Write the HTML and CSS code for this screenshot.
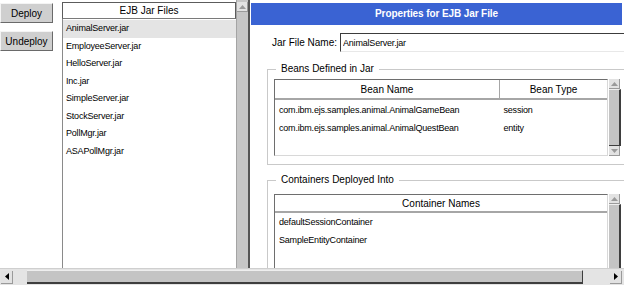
FILE: index.html
```html
<!DOCTYPE html>
<html lang="en">
<head>
    <meta charset="UTF-8">
    <title>EJB Jar Files</title>
    <link rel="stylesheet" href="styles.css">
</head>
<body>
    <div class="window">
        <div class="main">
            <div class="actions">
                <button class="btn">Deploy</button>
                <button class="btn">Undeploy</button>
            </div>

            <div class="jar-list">
                <div class="list-head">EJB Jar Files</div>
                <ul class="list-body">
                    <li class="selected">AnimalServer.jar</li>
                    <li>EmployeeServer.jar</li>
                    <li>HelloServer.jar</li>
                    <li>Inc.jar</li>
                    <li>SimpleServer.jar</li>
                    <li>StockServer.jar</li>
                    <li>PollMgr.jar</li>
                    <li>ASAPollMgr.jar</li>
                </ul>
            </div>

            <div class="list-scroll">
                <div class="arrow-btn"><svg width="7" height="4" viewBox="0 0 7 4"><polygon points="0,4 3.5,0 7,4" fill="#9a9a9a"/></svg></div>
            </div>

            <div class="props">
                <div class="props-title">Properties for EJB Jar File</div>

                <div class="field-row">
                    <label for="jarName">Jar File Name:</label>
                    <input id="jarName" type="text" value="AnimalServer.jar">
                </div>

                <fieldset class="group">
                    <legend>Beans Defined in Jar</legend>
                    <div class="grid-wrap beans">
                        <div class="grid">
                            <table>
                                <thead>
                                    <tr>
                                        <th class="col-name">Bean Name</th>
                                        <th>Bean Type</th>
                                    </tr>
                                </thead>
                                <tbody>
                                    <tr>
                                        <td>com.ibm.ejs.samples.animal.AnimalGameBean</td>
                                        <td>session</td>
                                    </tr>
                                    <tr>
                                        <td>com.ibm.ejs.samples.animal.AnimalQuestBean</td>
                                        <td>entity</td>
                                    </tr>
                                </tbody>
                            </table>
                        </div>
                        <div class="vscroll">
                            <div class="arrow-btn"><svg width="7" height="4" viewBox="0 0 7 4"><polygon points="0,4 3.5,0 7,4" fill="#9a9a9a"/></svg></div>
                            <div class="thumb"></div>
                            <div class="arrow-btn"><svg width="7" height="4" viewBox="0 0 7 4"><polygon points="0,0 3.5,4 7,0" fill="#9a9a9a"/></svg></div>
                        </div>
                    </div>
                </fieldset>

                <fieldset class="group">
                    <legend>Containers Deployed Into</legend>
                    <div class="grid-wrap containers">
                        <div class="grid">
                            <table>
                                <thead>
                                    <tr>
                                        <th>Container Names</th>
                                    </tr>
                                </thead>
                                <tbody>
                                    <tr><td>defaultSessionContainer</td></tr>
                                    <tr><td>SampleEntityContainer</td></tr>
                                </tbody>
                            </table>
                        </div>
                        <div class="vscroll">
                            <div class="arrow-btn"><svg width="7" height="4" viewBox="0 0 7 4"><polygon points="0,4 3.5,0 7,4" fill="#9a9a9a"/></svg></div>
                            <div class="thumb"></div>
                            <div class="arrow-btn"><svg width="7" height="4" viewBox="0 0 7 4"><polygon points="0,0 3.5,4 7,0" fill="#9a9a9a"/></svg></div>
                        </div>
                    </div>
                </fieldset>
            </div>
        </div>

        <div class="hscroll">
            <div class="arrow-btn left"><svg width="4" height="7" viewBox="0 0 4 7"><polygon points="4,0 0,3.5 4,7" fill="#000"/></svg></div>
            <div class="hthumb"></div>
            <div class="arrow-btn right"><svg width="4" height="7" viewBox="0 0 4 7"><polygon points="0,0 4,3.5 0,7" fill="#000"/></svg></div>
        </div>
    </div>
</body>
</html>
```

FILE: styles.css
```css
body {
    margin: 0;
    width: 624px;
    height: 285px;
    overflow: hidden;
    background: #fff;
    font-family: "Liberation Sans", Arial, sans-serif;
    font-size: 10px;
    color: #000;
}
.window {
    display: flex;
    flex-direction: column;
    height: 285px;
}
.main {
    display: flex;
    height: 268px;
    overflow: hidden;
}

/* left buttons */
.actions {
    width: 62px;
    flex: none;
    display: flex;
    flex-direction: column;
    align-items: flex-start;
    gap: 8px;
    padding-top: 3px;
    box-sizing: border-box;
}
.btn {
    font-family: "Liberation Sans", Arial, sans-serif;
    font-size: 10px;
    height: 20px;
    min-width: 53px;
    padding: 0 4px;
    background: #cfcfcf;
    color: #000;
    border: 1px solid;
    border-color: #f4f4f4 #6a6a6a #6a6a6a #f4f4f4;
}

/* jar list */
.jar-list {
    width: 174px;
    flex: none;
    display: flex;
    flex-direction: column;
}
.list-head {
    margin-top: 2px;
    height: 15px;
    line-height: 15px;
    text-align: center;
    border: 1px solid #5c5c5c;
    border-bottom-color: #7a7a7a;
    background: #fff;
}
.list-body {
    flex: 1;
    margin: 0;
    padding: 1px 0 0;
    list-style: none;
    border-left: 1px solid #8a8a8a;
}
.list-body li {
    height: 17.5px;
    line-height: 17.5px;
    padding-left: 3px;
    font-size: 9px;
    letter-spacing: -0.2px;
}
.list-body li.selected {
    background: #e4e4e4;
}
.list-scroll {
    width: 11px;
    flex: none;
    background: #c6c6c6;
    border-left: 1px solid #a4a4a4;
    border-right: 2px solid #555;
    padding-top: 2px;
}

/* arrow buttons used by scroll bars */
.arrow-btn {
    width: 11px;
    height: 10px;
    display: flex;
    align-items: center;
    justify-content: center;
    background: #e2e2e2;
    box-sizing: border-box;
    border-right: 1px solid #9a9a9a;
    border-bottom: 1px solid #9a9a9a;
    flex: none;
}

/* properties panel */
.props {
    width: 380px;
    flex: none;
    padding-left: 1px;
    overflow: hidden;
}
.props-title {
    margin-top: 3px;
    width: 371px;
    height: 22px;
    line-height: 22px;
    background: #3a63d3;
    color: #fff;
    font-weight: bold;
    text-align: center;
    letter-spacing: -0.1px;
}
.field-row {
    display: flex;
    align-items: center;
    gap: 3px;
    margin: 8px 0 0 21px;
    height: 19px;
}
.field-row label {
    flex: none;
    white-space: nowrap;
}
.field-row input {
    flex: none;
    width: 300px;
    height: 19px;
    box-sizing: border-box;
    padding: 0 2px;
    font-family: "Liberation Sans", Arial, sans-serif;
    font-size: 9px;
    letter-spacing: -0.2px;
    border: 1px solid;
    border-color: #3c3c3c #e8e8e8 #e8e8e8 #3c3c3c;
    outline: none;
}
.group {
    margin: 11px 0 0 16px;
    padding: 4px 10px 8px 6px;
    border: 1px solid #c9c9c9;
    width: 347px;
}
.group legend {
    margin-left: 2px;
    padding: 0 5px;
    line-height: 12px;
}
.group + .group {
    margin-top: 9px;
    padding-top: 8px;
}
.grid-wrap {
    display: flex;
}
.grid-wrap.beans {
    height: 77px;
}
.grid-wrap.containers {
    height: 100px;
}
.grid {
    flex: 1;
    border: 1px solid;
    border-color: #6e6e6e #d8d8d8 #d8d8d8 #6e6e6e;
    background: #fff;
}
.grid table {
    width: 100%;
    border-collapse: collapse;
}
.grid th {
    height: 16px;
    font-weight: normal;
    font-size: 10px;
    border-bottom: 2px solid #a6a6a6;
    border-right: 1px solid #a6a6a6;
    background: #fff;
}
.grid th:last-child {
    border-right: none;
}
.grid th.col-name {
    width: 222px;
}
.grid td {
    height: 18px;
    padding: 0 0 0 4px;
    font-size: 9px;
    letter-spacing: -0.2px;
    white-space: nowrap;
}
.beans tbody tr:first-child td {
    padding-top: 1px;
}
.containers th {
    height: 14px;
}
.vscroll {
    width: 12px;
    flex: none;
    display: flex;
    flex-direction: column;
    padding: 0 0 0 1px;
}
.vscroll .thumb {
    flex: 1;
    background: #c4c4c4;
    border-right: 2px solid #3e3e3e;
    border-bottom: 1px solid #3e3e3e;
    border-top: 1px solid #eee;
}

/* bottom scroll bar */
.hscroll {
    height: 17px;
    display: flex;
    align-items: center;
    background: #e4e4e4;
    border-top: 1px solid #cfcfcf;
    box-sizing: border-box;
}
.hscroll .arrow-btn {
    height: 13px;
    width: 12px;
}
.hscroll .arrow-btn.left {
    margin-left: 1px;
}
.hscroll .arrow-btn.right {
    margin-left: 27px;
}
.hthumb {
    margin-left: 14px;
    width: 556px;
    height: 14px;
    box-sizing: border-box;
    background: #c4c4c4;
    border-top: 1px solid #eee;
    border-bottom: 2px solid #3e3e3e;
    border-right: 1px solid #3e3e3e;
}
```
